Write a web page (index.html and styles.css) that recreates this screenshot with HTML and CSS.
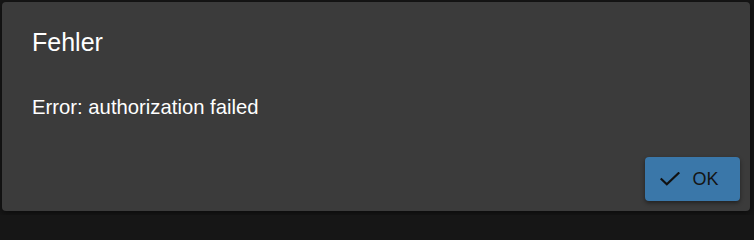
FILE: index.html
```html
<!DOCTYPE html>
<html lang="de">
<head>
<meta charset="utf-8">
<title>Fehler</title>
<link rel="stylesheet" href="styles.css">
</head>
<body>
<div class="dialog" role="dialog">
  <h2 class="dialog-title">Fehler</h2>
  <div class="dialog-content">Error: authorization failed</div>
  <div class="dialog-actions">
    <button class="btn-ok" type="button">
      <svg class="check" width="20" height="14" viewBox="0 0 20 14" aria-hidden="true"><path d="M1.5 7.2 L6.8 12.2 L18.5 1.2" fill="none" stroke="#111" stroke-width="2.2" stroke-linecap="square"/></svg>
      <span>OK</span>
    </button>
  </div>
</div>
</body>
</html>
```
FILE: styles.css
```css
html, body {
  margin: 0;
  padding: 0;
  background: #161616;
  width: 754px;
  height: 215px;
  overflow: hidden;
}
body {
  font-family: "Liberation Sans", Arial, sans-serif;
  padding: 2px 4px 4px 2px;
  box-sizing: border-box;
}
.dialog {
  background: #3b3b3b;
  border-radius: 4px;
  height: 209px;
  box-sizing: border-box;
  display: flex;
  flex-direction: column;
  color: #ffffff;
  box-shadow: 0 2px 6px rgba(0,0,0,0.5);
}
.dialog-title {
  margin: 0;
  padding: 26px 30px 0 30px;
  font-size: 25px;
  font-weight: normal;
  line-height: 29px;
}
.dialog-content {
  padding: 38px 30px 0 30px;
  font-size: 20.3px;
  line-height: 24px;
  flex: 1;
}
.dialog-actions {
  display: flex;
  justify-content: flex-end;
  padding: 0 10px 10px 0;
}
.btn-ok {
  width: 95px;
  height: 44px;
  background: #3a77a9;
  border: none;
  border-radius: 4px;
  color: #141414;
  font-family: "Liberation Sans", Arial, sans-serif;
  font-size: 18px;
  display: flex;
  align-items: center;
  justify-content: center;
  gap: 12px;
  padding: 0 6px 0 0;
  box-shadow: 0 2px 4px rgba(0,0,0,0.45);
}
.check {
  display: block;
}
```
